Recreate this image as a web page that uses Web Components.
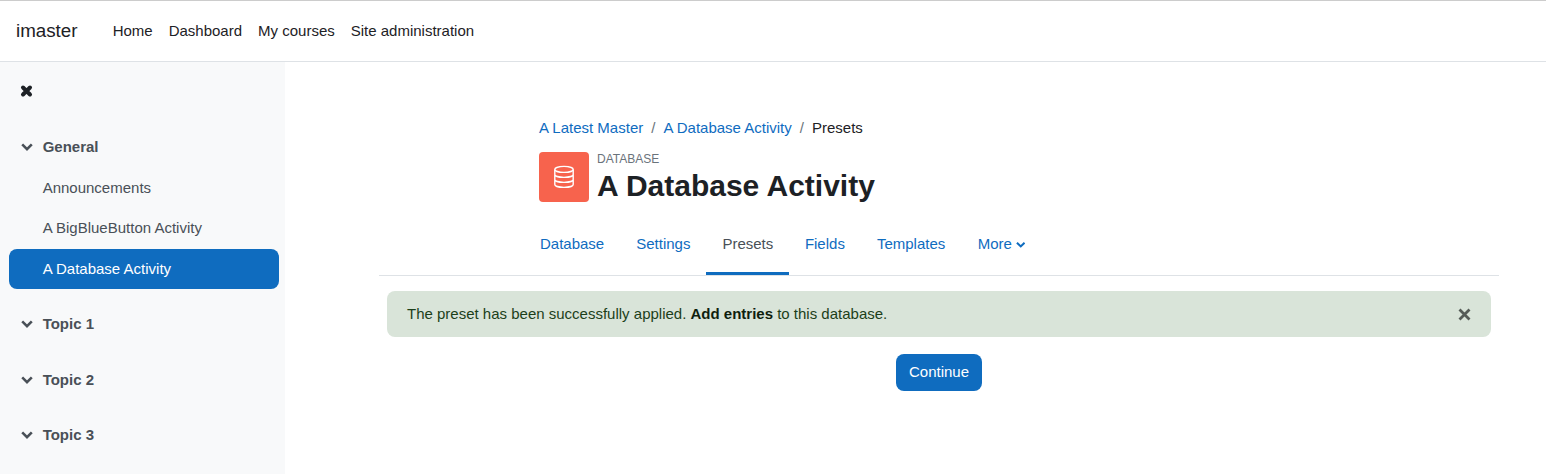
<!DOCTYPE html>
<html lang="en"><head><meta charset="utf-8"><title>Presets</title>
<style>
html,body{margin:0;padding:0;height:474px;overflow:hidden;background:#fff;font:15px/22.5px "Liberation Sans",Arial,sans-serif;color:#1d2125}
</style></head><body>
<m-page>
  <m-navbar slot="top"></m-navbar>
  <m-sidebar slot="side"></m-sidebar>
  <m-main slot="main"></m-main>
</m-page>
<script>
const chev=(s,c,w=2.6)=>`<svg width="${s}" height="${s}" viewBox="0 0 12 12" aria-hidden="true"><path d="M1.200 3.400 6 8.100l4.800-4.700" fill="none" stroke="${c}" stroke-width="${w}"/></svg>`;
function def(name,css,html){
  customElements.define(name,class extends HTMLElement{
    constructor(){super();this.attachShadow({mode:'open'}).innerHTML=`<style>${css}</style>${html}`;}
  });
}
def('m-page',`:host{display:flex;flex-direction:column;height:474px}
.b{display:flex;flex:1;min-height:0}`,`<slot name="top"></slot><div class="b"><slot name="side"></slot><slot name="main"></slot></div>`);

def('m-navbar',`:host{display:flex;align-items:center;box-sizing:border-box;height:62px;border-top:1px solid #ccc;border-bottom:1px solid #dee2e6;background:#fff;padding:0 16px}
.brand{font-size:18.75px;margin-right:27.2px;color:#1d2125}
a{padding:0 8px;color:#1d2125;text-decoration:none}`,
`<span class="brand">imaster</span><a>Home</a><a>Dashboard</a><a>My courses</a><a>Site administration</a>`);

def('m-section',`:host{display:flex;align-items:center;height:22px;padding-left:21px;font-weight:700;color:#495057}
svg{margin-right:9.67px;flex:none}`,chev(12,'#495057')+`<slot></slot>`);

def('m-item',`:host{display:flex;align-items:center;box-sizing:border-box;height:40px;margin:0 6px 0 9px;padding-left:33.67px;border-radius:8px;color:#495057}
:host([active]){background:#0f6cbf;color:#fff}`,`<slot></slot>`);

def('m-sidebar',`:host{display:block;box-sizing:border-box;width:285px;flex:none;background:#f8f9fa;padding-top:21px}
.x{display:block;margin-left:20px;height:16px}
.g{margin-top:37px}.list{display:flex;flex-direction:column;margin-top:10px}
.list m-item+m-item{margin-top:.4px}
.t1{margin-top:24px}.t2{margin-top:34px}.t3{margin-top:33px}`,
`<svg class="x" width="13" height="16" viewBox="0 0 13 16" aria-hidden="true"><path d="M3 4.500 10 11.500M10 4.500 3 11.500" stroke="#1d2125" stroke-width="4" stroke-linecap="round"/></svg>
<m-section class="g">General</m-section>
<div class="list"><m-item>Announcements</m-item><m-item>A BigBlueButton Activity</m-item><m-item active>A Database Activity</m-item></div>
<m-section class="t1">Topic 1</m-section><m-section class="t2">Topic 2</m-section><m-section class="t3">Topic 3</m-section>`);

def('m-breadcrumb',`:host{display:flex;height:22px;align-items:center;color:#1d2125}
a{color:#0f6cbf;text-decoration:none}.s{color:#6a737b;padding:0 8px}`,
`<a>A Latest Master</a><span class="s">/</span><a>A Database Activity</a><span class="s">/</span><span>Presets</span>`);

def('m-heading',`:host{display:flex;align-items:flex-start}
.ic{width:50px;height:50px;border-radius:4px;background:#f7634d;display:flex;align-items:center;justify-content:center;margin-right:8px;flex:none}
.t{display:flex;flex-direction:column}
.k{font-size:12px;line-height:16px;color:#6a737b;text-transform:uppercase;margin-top:-1px}
h1{margin:1px 0 0;font-size:30px;line-height:36px;font-weight:700;color:#1d2125}`,
`<div class="ic"><svg width="24" height="24" viewBox="0 0 24 24" fill="none" stroke="#fff" stroke-width="1.400" aria-hidden="true"><ellipse cx="12" cy="4.400" rx="9.200" ry="3"/><path d="M2.800 4.400v15c0 1.700 4 3 9.200 3s9.200-1.300 9.200-3v-15M2.800 9.400c0 1.700 4 3 9.200 3s9.200-1.300 9.200-3M2.800 14.400c0 1.700 4 3 9.200 3s9.200-1.300 9.200-3"/></svg></div><div class="t"><div class="k">Database</div><h1>A Database Activity</h1></div>`);

def('m-tabs',`:host{display:flex;height:54px;padding-left:160px;border-bottom:1px solid #dee2e6}
a{box-sizing:border-box;height:54px;display:flex;align-items:center;padding:0 16px 4px;color:#0f6cbf;text-decoration:none;gap:4px;border-bottom:3px solid transparent}
a:first-of-type{padding-left:1px}
a.on{color:#495057;border-bottom-color:#0f6cbf}
a.f{padding-left:15.6px}
a.m{padding-left:16.5px}`,
`<a>Database</a><a>Settings</a><a class="on">Presets</a><a class="f">Fields</a><a>Templates</a><a class="m">More ${chev(9.5,'#0f6cbf')}</a>`);

def('m-alert',`:host{display:flex;align-items:center;justify-content:space-between;box-sizing:border-box;height:46px;margin:15px 8px 0;padding:0 20px;border-radius:8px;background:#d9e4d9;color:#1c3f1a}
b{color:#0f1e0e}svg{flex:none;margin-right:0}`,
`<span>The preset has been successfully applied. <b>Add entries</b> to this database.</span><svg width="13" height="13" viewBox="0 0 13 13" aria-label="close"><path d="M1.500 1.500l10 10M11.500 1.500l-10 10" stroke="#555b57" stroke-width="2.800"/></svg>`);

def('m-button',`:host{display:inline-flex;align-items:center;justify-content:center;box-sizing:border-box;height:37px;padding:0 13px;border-radius:8px;background:#0f6cbf;color:#fff}`,`<slot></slot>`);

def('m-main',`:host{display:block;flex:1;min-width:0;box-sizing:border-box;padding:55px 47px 0 94px}
.head{padding-left:160px}
m-heading{margin-top:13px}m-tabs{margin-top:17px}
.c{display:flex;justify-content:center;margin-top:17px}`,
`<div class="head"><m-breadcrumb></m-breadcrumb><m-heading></m-heading></div><m-tabs></m-tabs><m-alert></m-alert><div class="c"><m-button>Continue</m-button></div>`);
</script>
</body></html>
